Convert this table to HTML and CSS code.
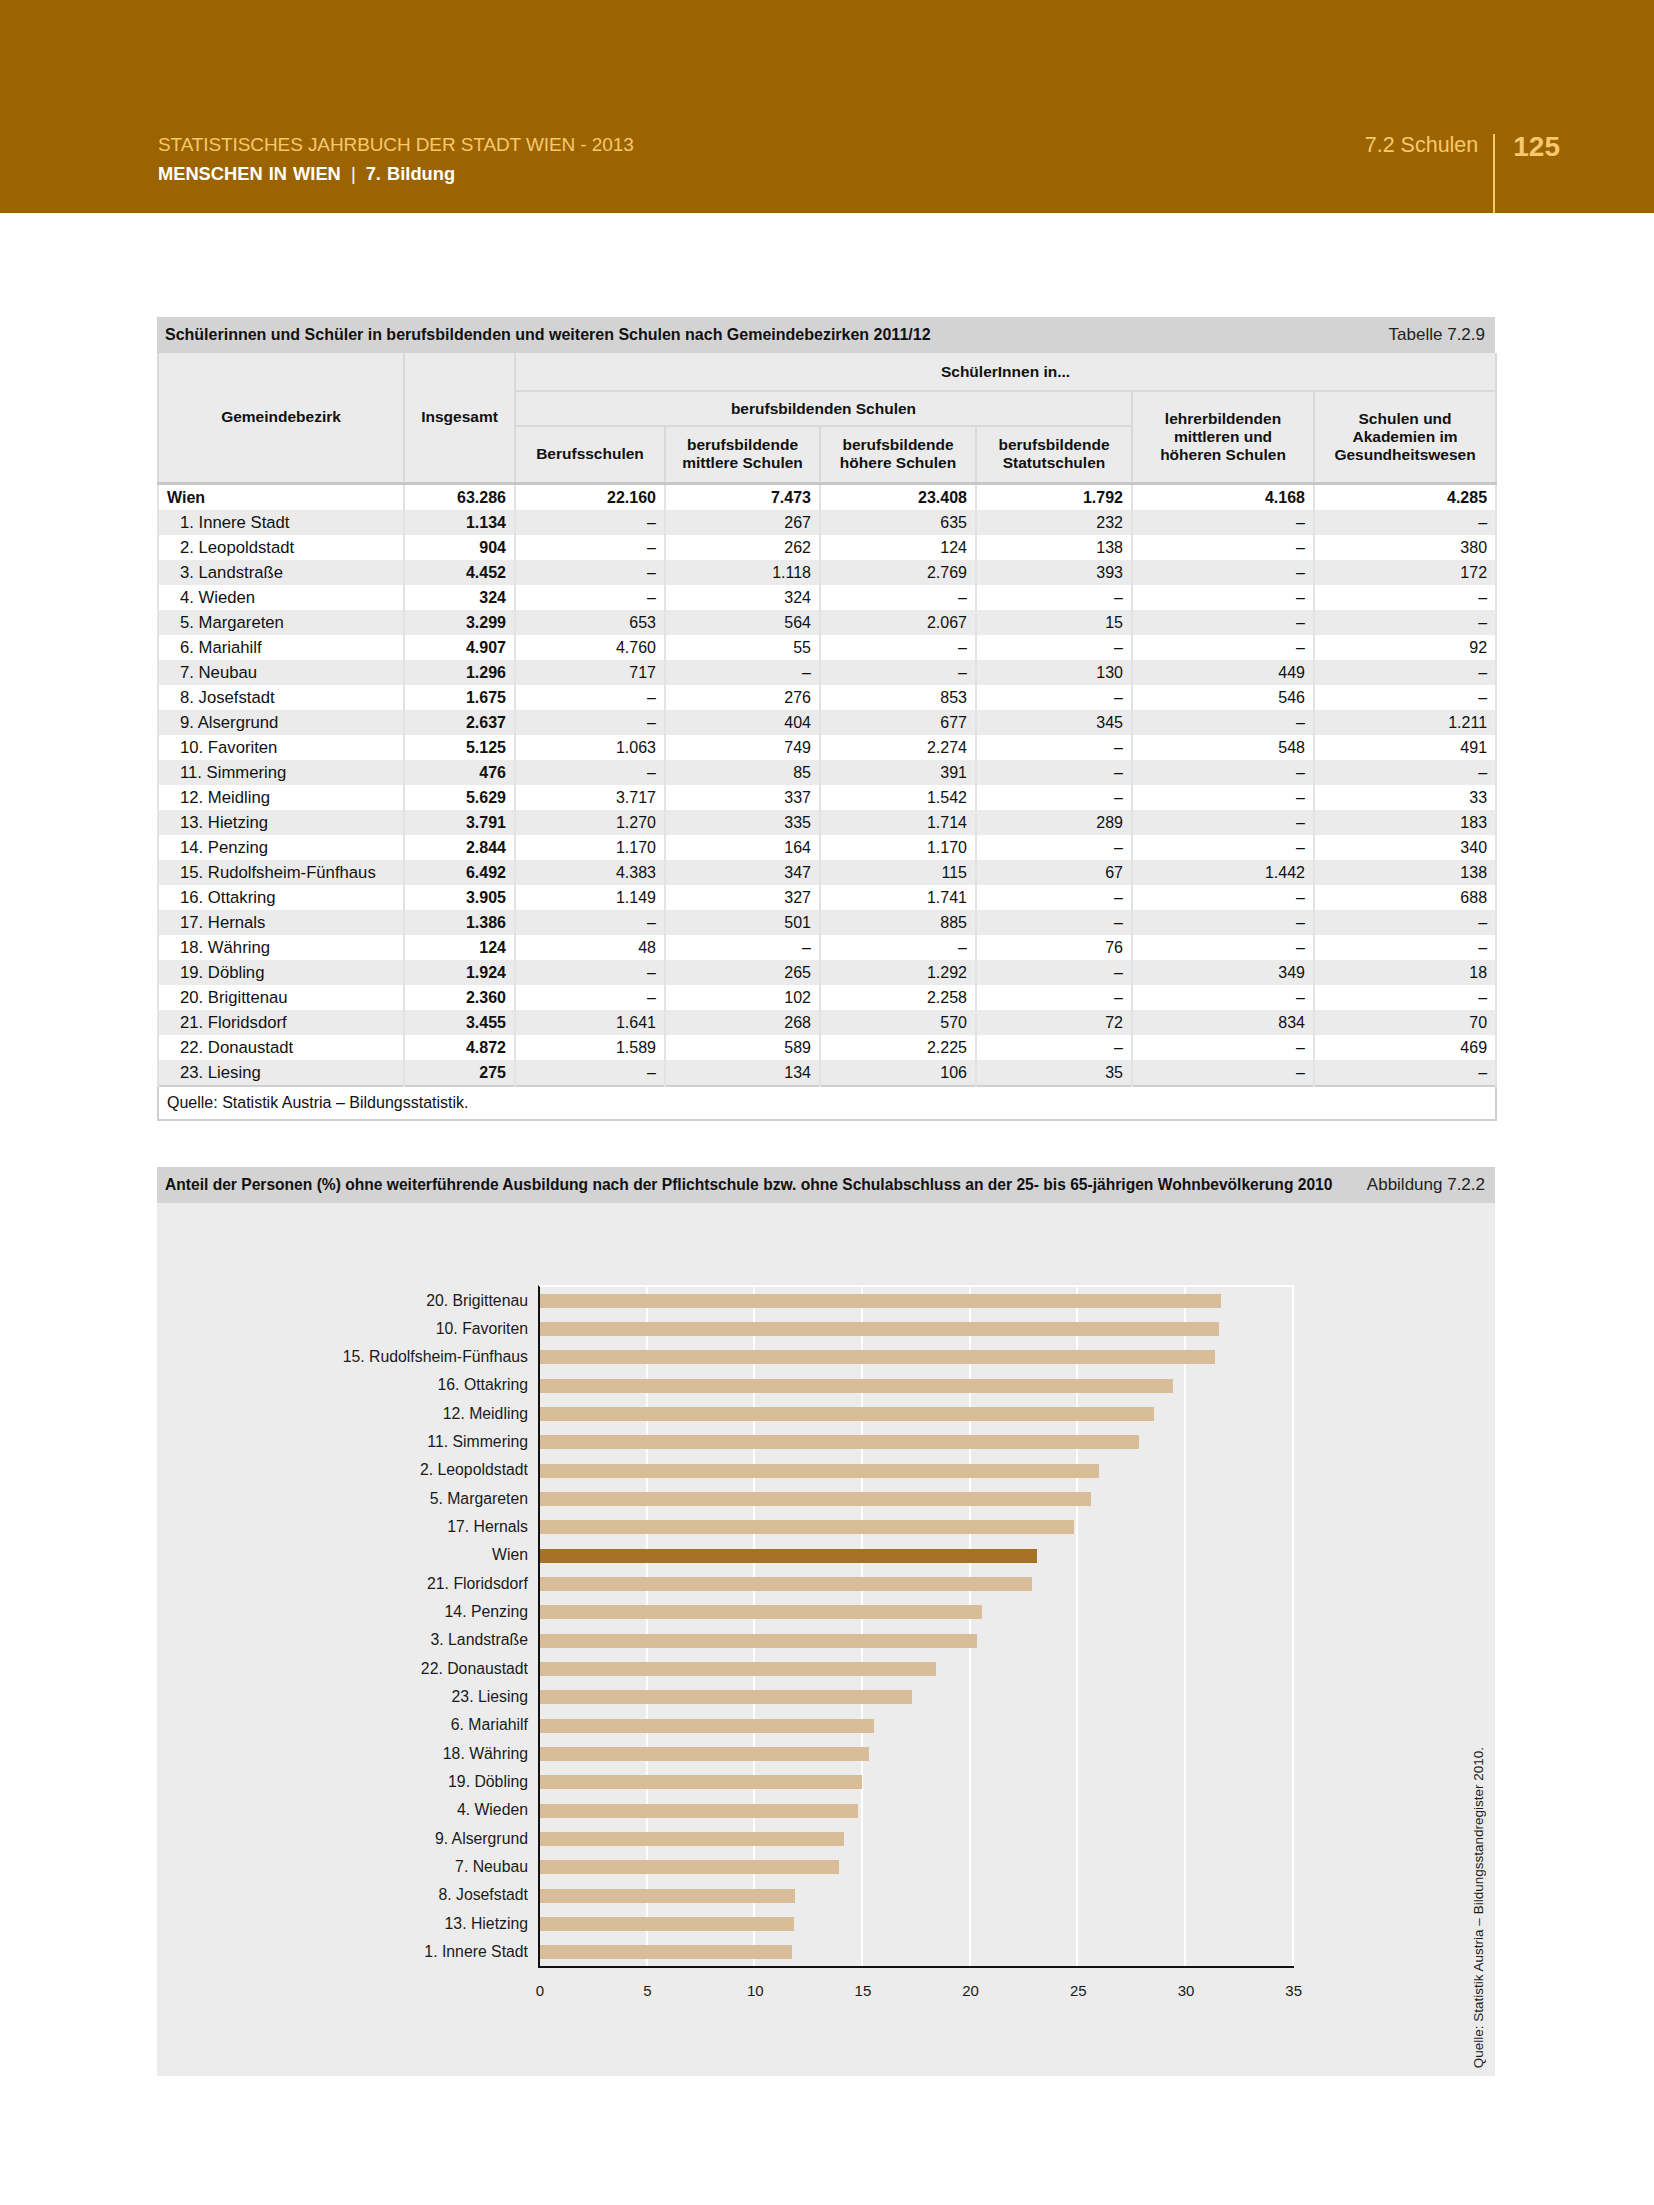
FILE: index.html
```html
<!DOCTYPE html>
<html lang="de">
<head>
<meta charset="utf-8">
<title>Statistisches Jahrbuch der Stadt Wien 2013 – 7.2 Schulen</title>
<link rel="stylesheet" href="styles.css">
</head>
<body>
<header class="page-head">
  <div class="head-left">
    <div class="head-title">STATISTISCHES JAHRBUCH DER STADT WIEN - 2013</div>
    <div class="head-sub">MENSCHEN IN WIEN <span class="bar">|</span> 7. Bildung</div>
  </div>
  <div class="head-right">
    <div class="head-section">7.2 Schulen</div>
    <div class="head-divider"></div>
    <div class="head-page">125</div>
  </div>
</header>

<main class="content">
  <section class="panel table-panel">
    <div class="panel-title">
      <span class="panel-title-text">Schülerinnen und Schüler in berufsbildenden und weiteren Schulen nach Gemeindebezirken 2011/12</span>
      <span class="panel-title-ref">Tabelle 7.2.9</span>
    </div>
    <table class="data">
      <colgroup>
        <col class="c-name"><col class="c-tot"><col class="c-a"><col class="c-b"><col class="c-c"><col class="c-d"><col class="c-e"><col class="c-f">
      </colgroup>
      <thead>
        <tr class="h1">
          <th rowspan="3">Gemeindebezirk</th>
          <th rowspan="3">Insgesamt</th>
          <th colspan="6">SchülerInnen in...</th>
        </tr>
        <tr class="h2">
          <th colspan="4">berufsbildenden Schulen</th>
          <th rowspan="2">lehrerbildenden<br>mittleren und<br>höheren Schulen</th>
          <th rowspan="2">Schulen und<br>Akademien im<br>Gesundheitswesen</th>
        </tr>
        <tr class="h3">
          <th>Berufsschulen</th>
          <th>berufsbildende<br>mittlere Schulen</th>
          <th>berufsbildende<br>höhere Schulen</th>
          <th>berufsbildende<br>Statutschulen</th>
        </tr>
      </thead>
      <tbody>
        <tr class="total"><td class="name">Wien</td><td>63.286</td><td>22.160</td><td>7.473</td><td>23.408</td><td>1.792</td><td>4.168</td><td>4.285</td></tr>
        <tr><td class="name">1. Innere Stadt</td><td class="tot">1.134</td><td>–</td><td>267</td><td>635</td><td>232</td><td>–</td><td>–</td></tr>
        <tr><td class="name">2. Leopoldstadt</td><td class="tot">904</td><td>–</td><td>262</td><td>124</td><td>138</td><td>–</td><td>380</td></tr>
        <tr><td class="name">3. Landstraße</td><td class="tot">4.452</td><td>–</td><td>1.118</td><td>2.769</td><td>393</td><td>–</td><td>172</td></tr>
        <tr><td class="name">4. Wieden</td><td class="tot">324</td><td>–</td><td>324</td><td>–</td><td>–</td><td>–</td><td>–</td></tr>
        <tr><td class="name">5. Margareten</td><td class="tot">3.299</td><td>653</td><td>564</td><td>2.067</td><td>15</td><td>–</td><td>–</td></tr>
        <tr><td class="name">6. Mariahilf</td><td class="tot">4.907</td><td>4.760</td><td>55</td><td>–</td><td>–</td><td>–</td><td>92</td></tr>
        <tr><td class="name">7. Neubau</td><td class="tot">1.296</td><td>717</td><td>–</td><td>–</td><td>130</td><td>449</td><td>–</td></tr>
        <tr><td class="name">8. Josefstadt</td><td class="tot">1.675</td><td>–</td><td>276</td><td>853</td><td>–</td><td>546</td><td>–</td></tr>
        <tr><td class="name">9. Alsergrund</td><td class="tot">2.637</td><td>–</td><td>404</td><td>677</td><td>345</td><td>–</td><td>1.211</td></tr>
        <tr><td class="name">10. Favoriten</td><td class="tot">5.125</td><td>1.063</td><td>749</td><td>2.274</td><td>–</td><td>548</td><td>491</td></tr>
        <tr><td class="name">11. Simmering</td><td class="tot">476</td><td>–</td><td>85</td><td>391</td><td>–</td><td>–</td><td>–</td></tr>
        <tr><td class="name">12. Meidling</td><td class="tot">5.629</td><td>3.717</td><td>337</td><td>1.542</td><td>–</td><td>–</td><td>33</td></tr>
        <tr><td class="name">13. Hietzing</td><td class="tot">3.791</td><td>1.270</td><td>335</td><td>1.714</td><td>289</td><td>–</td><td>183</td></tr>
        <tr><td class="name">14. Penzing</td><td class="tot">2.844</td><td>1.170</td><td>164</td><td>1.170</td><td>–</td><td>–</td><td>340</td></tr>
        <tr><td class="name">15. Rudolfsheim-Fünfhaus</td><td class="tot">6.492</td><td>4.383</td><td>347</td><td>115</td><td>67</td><td>1.442</td><td>138</td></tr>
        <tr><td class="name">16. Ottakring</td><td class="tot">3.905</td><td>1.149</td><td>327</td><td>1.741</td><td>–</td><td>–</td><td>688</td></tr>
        <tr><td class="name">17. Hernals</td><td class="tot">1.386</td><td>–</td><td>501</td><td>885</td><td>–</td><td>–</td><td>–</td></tr>
        <tr><td class="name">18. Währing</td><td class="tot">124</td><td>48</td><td>–</td><td>–</td><td>76</td><td>–</td><td>–</td></tr>
        <tr><td class="name">19. Döbling</td><td class="tot">1.924</td><td>–</td><td>265</td><td>1.292</td><td>–</td><td>349</td><td>18</td></tr>
        <tr><td class="name">20. Brigittenau</td><td class="tot">2.360</td><td>–</td><td>102</td><td>2.258</td><td>–</td><td>–</td><td>–</td></tr>
        <tr><td class="name">21. Floridsdorf</td><td class="tot">3.455</td><td>1.641</td><td>268</td><td>570</td><td>72</td><td>834</td><td>70</td></tr>
        <tr><td class="name">22. Donaustadt</td><td class="tot">4.872</td><td>1.589</td><td>589</td><td>2.225</td><td>–</td><td>–</td><td>469</td></tr>
        <tr><td class="name">23. Liesing</td><td class="tot">275</td><td>–</td><td>134</td><td>106</td><td>35</td><td>–</td><td>–</td></tr>
      </tbody>
      <tfoot>
        <tr><td colspan="8" class="source">Quelle: Statistik Austria – Bildungsstatistik.</td></tr>
      </tfoot>
    </table>
  </section>

  <section class="panel chart-panel">
    <div class="panel-title">
      <span class="panel-title-text chart-title">Anteil der Personen (%) ohne weiterführende Ausbildung nach der Pflichtschule bzw. ohne Schulabschluss an der 25- bis 65-jährigen Wohnbevölkerung 2010</span>
      <span class="panel-title-ref">Abbildung 7.2.2</span>
    </div>
    <div class="chart-body">
      <div class="chart-main">
        <div class="chart-grid">
          <div class="labels">
            <div class="label">20. Brigittenau</div>
            <div class="label">10. Favoriten</div>
            <div class="label">15. Rudolfsheim-Fünfhaus</div>
            <div class="label">16. Ottakring</div>
            <div class="label">12. Meidling</div>
            <div class="label">11. Simmering</div>
            <div class="label">2. Leopoldstadt</div>
            <div class="label">5. Margareten</div>
            <div class="label">17. Hernals</div>
            <div class="label">Wien</div>
            <div class="label">21. Floridsdorf</div>
            <div class="label">14. Penzing</div>
            <div class="label">3. Landstraße</div>
            <div class="label">22. Donaustadt</div>
            <div class="label">23. Liesing</div>
            <div class="label">6. Mariahilf</div>
            <div class="label">18. Währing</div>
            <div class="label">19. Döbling</div>
            <div class="label">4. Wieden</div>
            <div class="label">9. Alsergrund</div>
            <div class="label">7. Neubau</div>
            <div class="label">8. Josefstadt</div>
            <div class="label">13. Hietzing</div>
            <div class="label">1. Innere Stadt</div>
          </div>
          <div class="plot">
            <div class="row"><div class="barfill" style="width:90.29%"></div></div>
            <div class="row"><div class="barfill" style="width:90.00%"></div></div>
            <div class="row"><div class="barfill" style="width:89.57%"></div></div>
            <div class="row"><div class="barfill" style="width:84.00%"></div></div>
            <div class="row"><div class="barfill" style="width:81.43%"></div></div>
            <div class="row"><div class="barfill" style="width:79.43%"></div></div>
            <div class="row"><div class="barfill" style="width:74.14%"></div></div>
            <div class="row"><div class="barfill" style="width:73.14%"></div></div>
            <div class="row"><div class="barfill" style="width:70.86%"></div></div>
            <div class="row"><div class="barfill total" style="width:65.86%"></div></div>
            <div class="row"><div class="barfill" style="width:65.29%"></div></div>
            <div class="row"><div class="barfill" style="width:58.57%"></div></div>
            <div class="row"><div class="barfill" style="width:58.00%"></div></div>
            <div class="row"><div class="barfill" style="width:52.57%"></div></div>
            <div class="row"><div class="barfill" style="width:49.29%"></div></div>
            <div class="row"><div class="barfill" style="width:44.29%"></div></div>
            <div class="row"><div class="barfill" style="width:43.57%"></div></div>
            <div class="row"><div class="barfill" style="width:42.71%"></div></div>
            <div class="row"><div class="barfill" style="width:42.14%"></div></div>
            <div class="row"><div class="barfill" style="width:40.29%"></div></div>
            <div class="row"><div class="barfill" style="width:39.71%"></div></div>
            <div class="row"><div class="barfill" style="width:33.86%"></div></div>
            <div class="row"><div class="barfill" style="width:33.71%"></div></div>
            <div class="row"><div class="barfill" style="width:33.43%"></div></div>
          </div>
          <div class="ticks-spacer"></div>
          <div class="ticks">
            <span>0</span><span>5</span><span>10</span><span>15</span><span>20</span><span>25</span><span>30</span><span>35</span>
          </div>
        </div>
      </div>
      <div class="chart-source">Quelle: Statistik Austria – Bildungsstandregister 2010.</div>
    </div>
  </section>
</main>
</body>
</html>
```

FILE: styles.css
```css
* { box-sizing: border-box; }

html, body {
  margin: 0;
  padding: 0;
  background: #ffffff;
  font-family: "Liberation Sans", Arial, sans-serif;
  color: #111111;
}

/* ---------- page header ---------- */
.page-head {
  height: 213px;
  background: #9c6400;
  display: flex;
  justify-content: space-between;
  padding-left: 158px;
  padding-right: 94px;
}

.head-left {
  padding-top: 133px;
}

.head-title {
  font-size: 19px;
  line-height: 24px;
  color: #f7c86e;
  letter-spacing: -0.1px;
}

.head-sub {
  margin-top: 5px;
  font-size: 18.3px;
  line-height: 24px;
  font-weight: bold;
  color: #ffffff;
  word-spacing: 1px;
}

.head-sub .bar {
  padding: 0 4px;
  font-weight: normal;
}

.head-right {
  display: flex;
  align-items: flex-start;
  padding-top: 134px;
}

.head-section {
  margin-top: -1px;
  font-size: 21.5px;
  line-height: 24px;
  color: #f7c86e;
  padding-right: 15px;
}

.head-divider {
  width: 2px;
  height: 79px;
  background: #f7c86e;
}

.head-page {
  margin-top: -3px;
  padding-left: 18px;
  font-size: 28px;
  line-height: 32px;
  font-weight: bold;
  color: #f7c86e;
}

/* ---------- content ---------- */
.content {
  padding: 104px 0 0 157px;
  width: 1495px;
}

.panel {
  width: 1338px;
}

.panel-title {
  height: 36px;
  background: #d3d3d3;
  display: flex;
  align-items: center;
  justify-content: space-between;
  padding: 0 10px 0 8px;
  font-size: 16px;
}

.panel-title-text {
  font-weight: bold;
  white-space: nowrap;
}

.panel-title-ref {
  font-weight: normal;
  font-size: 17px;
  color: #222222;
  white-space: nowrap;
}

/* ---------- table ---------- */
.data {
  width: 1338px;
  table-layout: fixed;
  border-collapse: collapse;
  font-size: 16px;
  border-left: 2px solid #cfcfcf;
  border-right: 2px solid #cfcfcf;
  border-bottom: 2px solid #cfcfcf;
}

.c-name { width: 246px; }
.c-tot  { width: 111px; }
.c-a    { width: 150px; }
.c-b    { width: 155px; }
.c-c    { width: 156px; }
.c-d    { width: 156px; }
.c-e    { width: 182px; }
.c-f    { width: 182px; }

.data thead th {
  background: #ebebeb;
  font-size: 15.5px;
  font-weight: bold;
  line-height: 18px;
  text-align: center;
  vertical-align: middle;
  border: 2px solid #d9d9d9;
  padding: 0 4px;
}

.data thead tr.h1 { height: 38px; }
.data thead tr.h2 { height: 35px; }
.data thead tr.h3 { height: 57px; }
.data thead tr.h3 th { border-bottom: 3px solid #c6c6c6; }
.data thead tr.h1 th[rowspan] { border-bottom: 3px solid #c6c6c6; }
.data thead tr.h2 th[rowspan] { border-bottom: 3px solid #c6c6c6; }
.data thead tr.h1 th { border-top: none; }

.data tbody td {
  height: 25px;
  padding: 0 8px 0 8px;
  line-height: 25px;
  text-align: right;
  white-space: nowrap;
  border-left: 2px solid #e3e3e3;
  border-right: 2px solid #e3e3e3;
}

.data tbody tr:nth-child(even) td {
  background: #ebebeb;
}

.data tbody td.name {
  text-align: left;
  padding-left: 21px;
  font-size: 16.7px;
}

.data tbody tr.total td {
  font-weight: bold;
}

.data tbody tr.total td.name {
  padding-left: 8px;
  font-size: 16px;
}

.data tbody td.tot {
  font-weight: bold;
}

.data tfoot td.source {
  height: 34px;
  padding: 0 8px;
  text-align: left;
  font-size: 16px;
  border-top: 2px solid #d0d0d0;
  background: #ffffff;
}

/* ---------- chart ---------- */
.chart-panel {
  margin-top: 46px;
}

.chart-title {
  font-size: 15.6px;
}

.chart-body {
  background: #ececec;
  height: 873px;
  display: flex;
}

.chart-main {
  flex: 1;
  padding-top: 82px;
}

.chart-grid {
  display: grid;
  grid-template-columns: 381px 756px;
}

.labels {
  padding-top: 2px;
}

.label {
  height: 28.33px;
  line-height: 28.33px;
  text-align: right;
  padding-right: 10px;
  font-size: 15.8px;
  color: #1a1a1a;
  white-space: nowrap;
}

.plot {
  border-left: 2px solid #111111;
  border-bottom: 2px solid #111111;
  border-top: 2px solid #ffffff;
  background-image: repeating-linear-gradient(to right,
    transparent 0px, transparent 105.7px,
    #ffffff 105.7px, #ffffff 107.7px);
}

.row {
  height: 28.33px;
  display: flex;
  align-items: center;
  width: 754px;
}

.barfill {
  height: 14px;
  background: #d9bc98;
}

.barfill.total {
  background: #a67326;
}

.ticks {
  display: flex;
  margin-left: -52px;
  margin-top: 14px;
}

.ticks span {
  flex: 0 0 107.7px;
  text-align: center;
  font-size: 15px;
  line-height: 18px;
  color: #1a1a1a;
}

.chart-source {
  align-self: flex-end;
  margin-bottom: 7px;
  margin-right: 8px;
  writing-mode: vertical-rl;
  transform: rotate(180deg);
  font-size: 13.5px;
  line-height: 16px;
  color: #1a1a1a;
  white-space: nowrap;
}
```
